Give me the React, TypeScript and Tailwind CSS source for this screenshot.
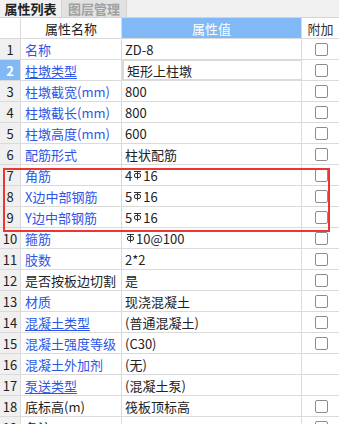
import React from "react";

type Row = {
  no: number;
  name: string;
  value: React.ReactNode;
  link?: boolean; // blue name text
  underline?: boolean;
  check?: boolean;
};

// grade III rebar symbol, drawn since no font carries it
function Rebar() {
  return (
    <svg width="9" height="10" viewBox="0 0 9 10" className="inline-block align-top mt-[1px] mx-[1px]" fill="none" stroke="#333" strokeWidth="1">
      <path d="M1 1.5H8" />
      <path d="M4.5 1.5V9.5" />
      <rect x="1.5" y="3.5" width="6" height="4" rx="1.5" />
    </svg>
  );
}

const rows: Row[] = [
  { no: 1, name: "名称", value: "ZD-8", link: true, check: true },
  { no: 2, name: "柱墩类型", value: "矩形上柱墩", link: true, underline: true, check: true },
  { no: 3, name: "柱墩截宽(mm)", value: "800", link: true, check: true },
  { no: 4, name: "柱墩截长(mm)", value: "800", link: true, check: true },
  { no: 5, name: "柱墩高度(mm)", value: "600", link: true, check: true },
  { no: 6, name: "配筋形式", value: "柱状配筋", link: true, check: true },
  { no: 7, name: "角筋", value: <>4<Rebar />16</>, link: true, check: true },
  { no: 8, name: "X边中部钢筋", value: <>5<Rebar />16</>, link: true, check: true },
  { no: 9, name: "Y边中部钢筋", value: <>5<Rebar />16</>, link: true, check: true },
  { no: 10, name: "箍筋", value: <><Rebar />10@100</>, link: true, check: true },
  { no: 11, name: "肢数", value: "2*2", link: true, check: true },
  { no: 12, name: "是否按板边切割", value: "是", check: true },
  { no: 13, name: "材质", value: "现浇混凝土", link: true, check: true },
  { no: 14, name: "混凝土类型", value: "(普通混凝土)", link: true, underline: true, check: true },
  { no: 15, name: "混凝土强度等级", value: "(C30)", link: true, check: true },
  { no: 16, name: "混凝土外加剂", value: "(无)", link: true },
  { no: 17, name: "泵送类型", value: "(混凝土泵)", link: true, underline: true },
  { no: 18, name: "底标高(m)", value: "筏板顶标高", check: true },
  { no: 19, name: "备注", value: "", check: true },
];

function Check() {
  return <div className="w-[13px] h-[13px] rounded-[2px] border border-[#8c8c8c] bg-white" />;
}

export default function App() {
  return (
    <div
      className="relative w-[339px] h-[424px] overflow-hidden bg-white text-[13px] text-[#222]"
      style={{ fontFamily: '"Noto Sans CJK SC", "Microsoft YaHei", sans-serif' }}
    >
      {/* tabs */}
      <div className="flex h-[18px] bg-[#f0f0f0] border-b border-[#d4d4d4]">
        <div className="w-[61px] flex items-center justify-center font-bold text-[13px] text-[#222] leading-none">
          属性列表
        </div>
        <div className="w-[66px] flex items-center justify-center font-bold text-[13px] text-[#a0a0a0] bg-[#e2e2e2] border-x border-[#d4d4d4] leading-none">
          图层管理
        </div>
      </div>

      {/* header */}
      <div className="flex h-[21px] border-b border-[#dadada] leading-none">
        <div className="w-[21px] border-r border-[#dadada]" />
        <div className="w-[101px] flex items-center justify-center border-r border-[#dadada]">属性名称</div>
        <div className="w-[180px] flex items-center justify-center bg-[#80b9f6] text-white border-r border-[#dadada]">属性值</div>
        <div className="flex-1 flex items-center justify-center text-[#333]">附加</div>
      </div>

      {rows.map((r) => {
        const selected = r.no === 2;
        return (
          <div key={r.no} className="flex h-[21px] border-b border-[#dadada] leading-none">
            <div
              className={`w-[21px] flex items-center justify-center border-r border-[#dadada] ${
                selected ? "bg-[#80b9f6] text-white font-bold" : "bg-[#f0f0f0] text-[#222]"
              }`}
            >
              {r.no}
            </div>
            <div
              className={`w-[101px] flex items-center pl-[4px] border-r border-[#dadada] whitespace-nowrap overflow-hidden ${
                r.link ? "text-[#2d55e6]" : "text-[#222]"
              }`}
            >
              <span className={r.underline ? "underline underline-offset-2" : ""}>{r.name}</span>
            </div>
            <div
              className={`w-[180px] flex items-center pl-[3px] border-r border-[#dadada] whitespace-nowrap overflow-hidden ${
                selected ? "border-2 border-[#7f7f7f] -my-px h-[22px]" : ""
              }`}
            >
              <span className="flex items-start">{r.value}</span>
            </div>
            <div className="flex-1 flex items-center justify-center pl-[2px]">{r.check && <Check />}</div>
          </div>
        );
      })}

      {/* red highlight drawn over rows 7-9 */}
      <div className="absolute left-[3px] top-[168px] w-[327px] h-[64px] border-2 border-[#ee3535] pointer-events-none" />
    </div>
  );
}
